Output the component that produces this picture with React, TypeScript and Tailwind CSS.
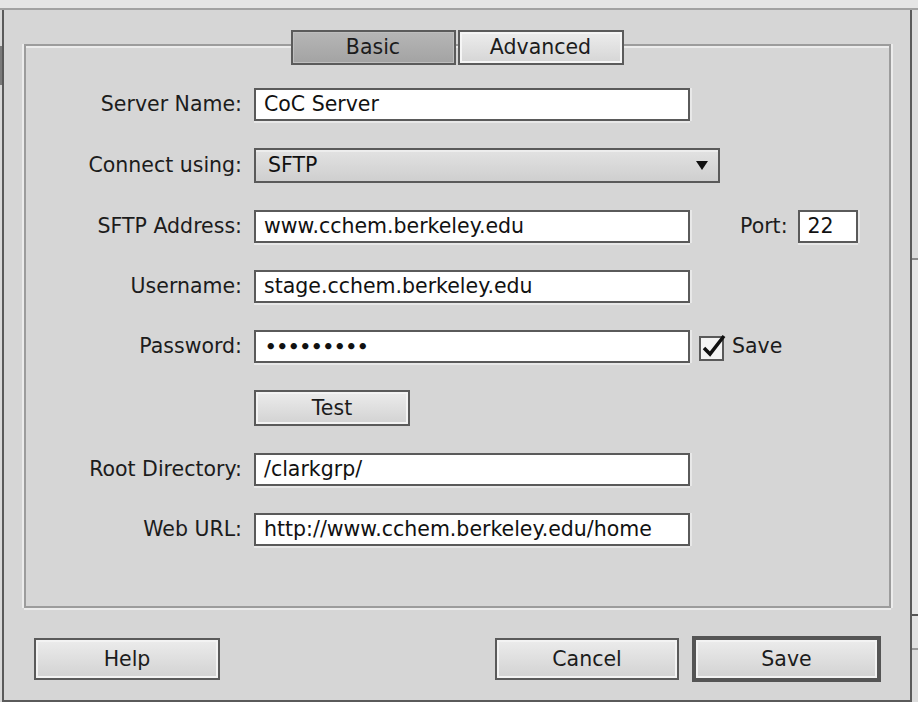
import React from 'react';

const TextBox: React.FC<{ value: string; className?: string }> = ({ value, className = 'w-[436px]' }) => (
  <div
    className={`${className} h-[33px] flex items-center overflow-hidden whitespace-nowrap bg-white border-2 border-[#5a5a5a] pl-[8px] text-[#111] shadow-[0_2px_0_#e8e8e8,2px_0_0_#e8e8e8]`}
  >
    {value}
  </div>
);

const Row: React.FC<{ label: string; children: React.ReactNode }> = ({ label, children }) => (
  <div className="flex items-center">
    <div className="w-[216px] text-right text-[#1c1c1c] whitespace-nowrap">{label}</div>
    <div className="ml-[12px] flex items-center">{children}</div>
  </div>
);

const MacButton: React.FC<{ label: string; className: string; isDefault?: boolean }> = ({ label, className, isDefault }) => (
  <div
    className={`${className} flex items-center justify-center text-[#1c1c1c] bg-gradient-to-b from-[#ececec] to-[#d2d2d2] shadow-[inset_0_0_0_2px_#f3f3f3] ${
      isDefault ? 'border-[4px] border-[#555]' : 'border-2 border-[#5a5a5a]'
    }`}
  >
    {label}
  </div>
);

export default function App() {
  return (
    <div className="w-[918px] h-[702px] overflow-hidden bg-[#dedede] flex flex-col font-['DejaVu_Sans',Verdana,sans-serif] text-[20.5px] leading-none">
      {/* title bar edge */}
      <div className="h-[10px] bg-[#e5e5e5] border-b-2 border-[#a2a2a2]" />

      <div className="flex flex-1">
        {/* left strip of the window behind */}
        <div className="w-[2px] flex flex-col bg-[#d9d9d9]">
          <div className="h-[36px]" />
          <div className="h-[39px] bg-[#7a7a7a]" />
        </div>

        {/* sheet dialog */}
        <div className="w-[910px] h-[692px] flex flex-col bg-[#d6d6d6] border-x-2 border-b-2 border-[#5a5a5a]">
          {/* tabs */}
          <div className="relative z-10 mt-[20px] flex justify-center gap-[2px]">
            <div className="w-[165px] h-[35px] flex items-center justify-center border-2 border-[#5b5b5b] bg-gradient-to-b from-[#b6b6b6] to-[#a3a3a3] shadow-[inset_0_0_0_1px_#bebebe] text-[#1c1c1c]">
              Basic
            </div>
            <div className="w-[166px] h-[35px] flex items-center justify-center border-2 border-[#5b5b5b] bg-gradient-to-b from-[#ededed] to-[#d5d5d5] shadow-[inset_0_0_0_2px_#f5f5f5] text-[#1c1c1c]">
              Advanced
            </div>
          </div>

          {/* group box */}
          <div className="ml-[20px] mt-[-21px] w-[867px] h-[564px] border-2 border-[#9c9c9c] shadow-[-2px_0_0_#ececec,2px_0_0_#ececec,0_2px_0_#ececec,inset_0_2px_0_#ececec]">
            <div className="flex flex-col gap-[27px] pt-[42px]">
              <Row label="Server Name:">
                <TextBox value="CoC Server" />
              </Row>

              <Row label="Connect using:">
                <div className="w-[466px] h-[35px] flex items-center justify-between border-2 border-[#5a5a5a] bg-gradient-to-b from-[#e2e2e2] to-[#cfcfcf] shadow-[inset_0_2px_0_#ededed] pl-[12px] pr-[10px] text-[#111]">
                  <span>SFTP</span>
                  <svg width="12" height="9" viewBox="0 0 12 9">
                    <polygon points="0,0 12,0 6,9" fill="#111" />
                  </svg>
                </div>
              </Row>

              <Row label="SFTP Address:">
                <TextBox value="www.cchem.berkeley.edu" />
                <span className="ml-[50px] text-[#1c1c1c]">Port:</span>
                <TextBox value="22" className="ml-[10px] w-[60px]" />
              </Row>

              <Row label="Username:">
                <TextBox value="stage.cchem.berkeley.edu" />
              </Row>

              <Row label="Password:">
                <div className="w-[436px] h-[33px] flex items-center bg-white border-2 border-[#5a5a5a] pl-[9px] text-[18px] font-bold text-[#111] shadow-[0_2px_0_#e8e8e8,2px_0_0_#e8e8e8]">
                  •••••••••
                </div>
                <svg width="28" height="28" viewBox="0 0 28 28" className="ml-[9px]">
                  <rect x="1" y="4" width="23" height="23" fill="#f4f4f4" stroke="#5a5a5a" strokeWidth="2" />
                  <path d="M5 15 L11 21 L25 3" fill="none" stroke="#111" strokeWidth="3.5" strokeLinejoin="miter" />
                </svg>
                <span className="ml-[5px] text-[#1c1c1c]">Save</span>
              </Row>

              <Row label="">
                <MacButton label="Test" className="w-[156px] h-[36px]" />
              </Row>

              <Row label="Root Directory:">
                <TextBox value="/clarkgrp/" />
              </Row>

              <Row label="Web URL:">
                <TextBox value="http://www.cchem.berkeley.edu/home" />
              </Row>
            </div>
          </div>

          {/* bottom buttons */}
          <div className="mt-[28px] flex items-center pl-[30px] pr-[29px]">
            <MacButton label="Help" className="w-[186px] h-[42px]" />
            <MacButton label="Cancel" className="ml-auto w-[184px] h-[42px]" />
            <MacButton label="Save" className="ml-[13px] w-[189px] h-[46px]" isDefault />
          </div>
        </div>

        {/* right strip of the window behind */}
        <div className="w-[6px] flex flex-col bg-[#dcdcdc]">
          <div className="h-[248px]" />
          <div className="h-[2px] bg-[#8a8a8a]" />
          <div className="h-[354px] bg-[#e6e6e6]" />
          <div className="h-[2px] bg-[#555]" />
          <div className="h-[32px] bg-[#e2e2e2]" />
          <div className="h-[2px] bg-[#9a9a9a]" />
        </div>
      </div>
    </div>
  );
}
